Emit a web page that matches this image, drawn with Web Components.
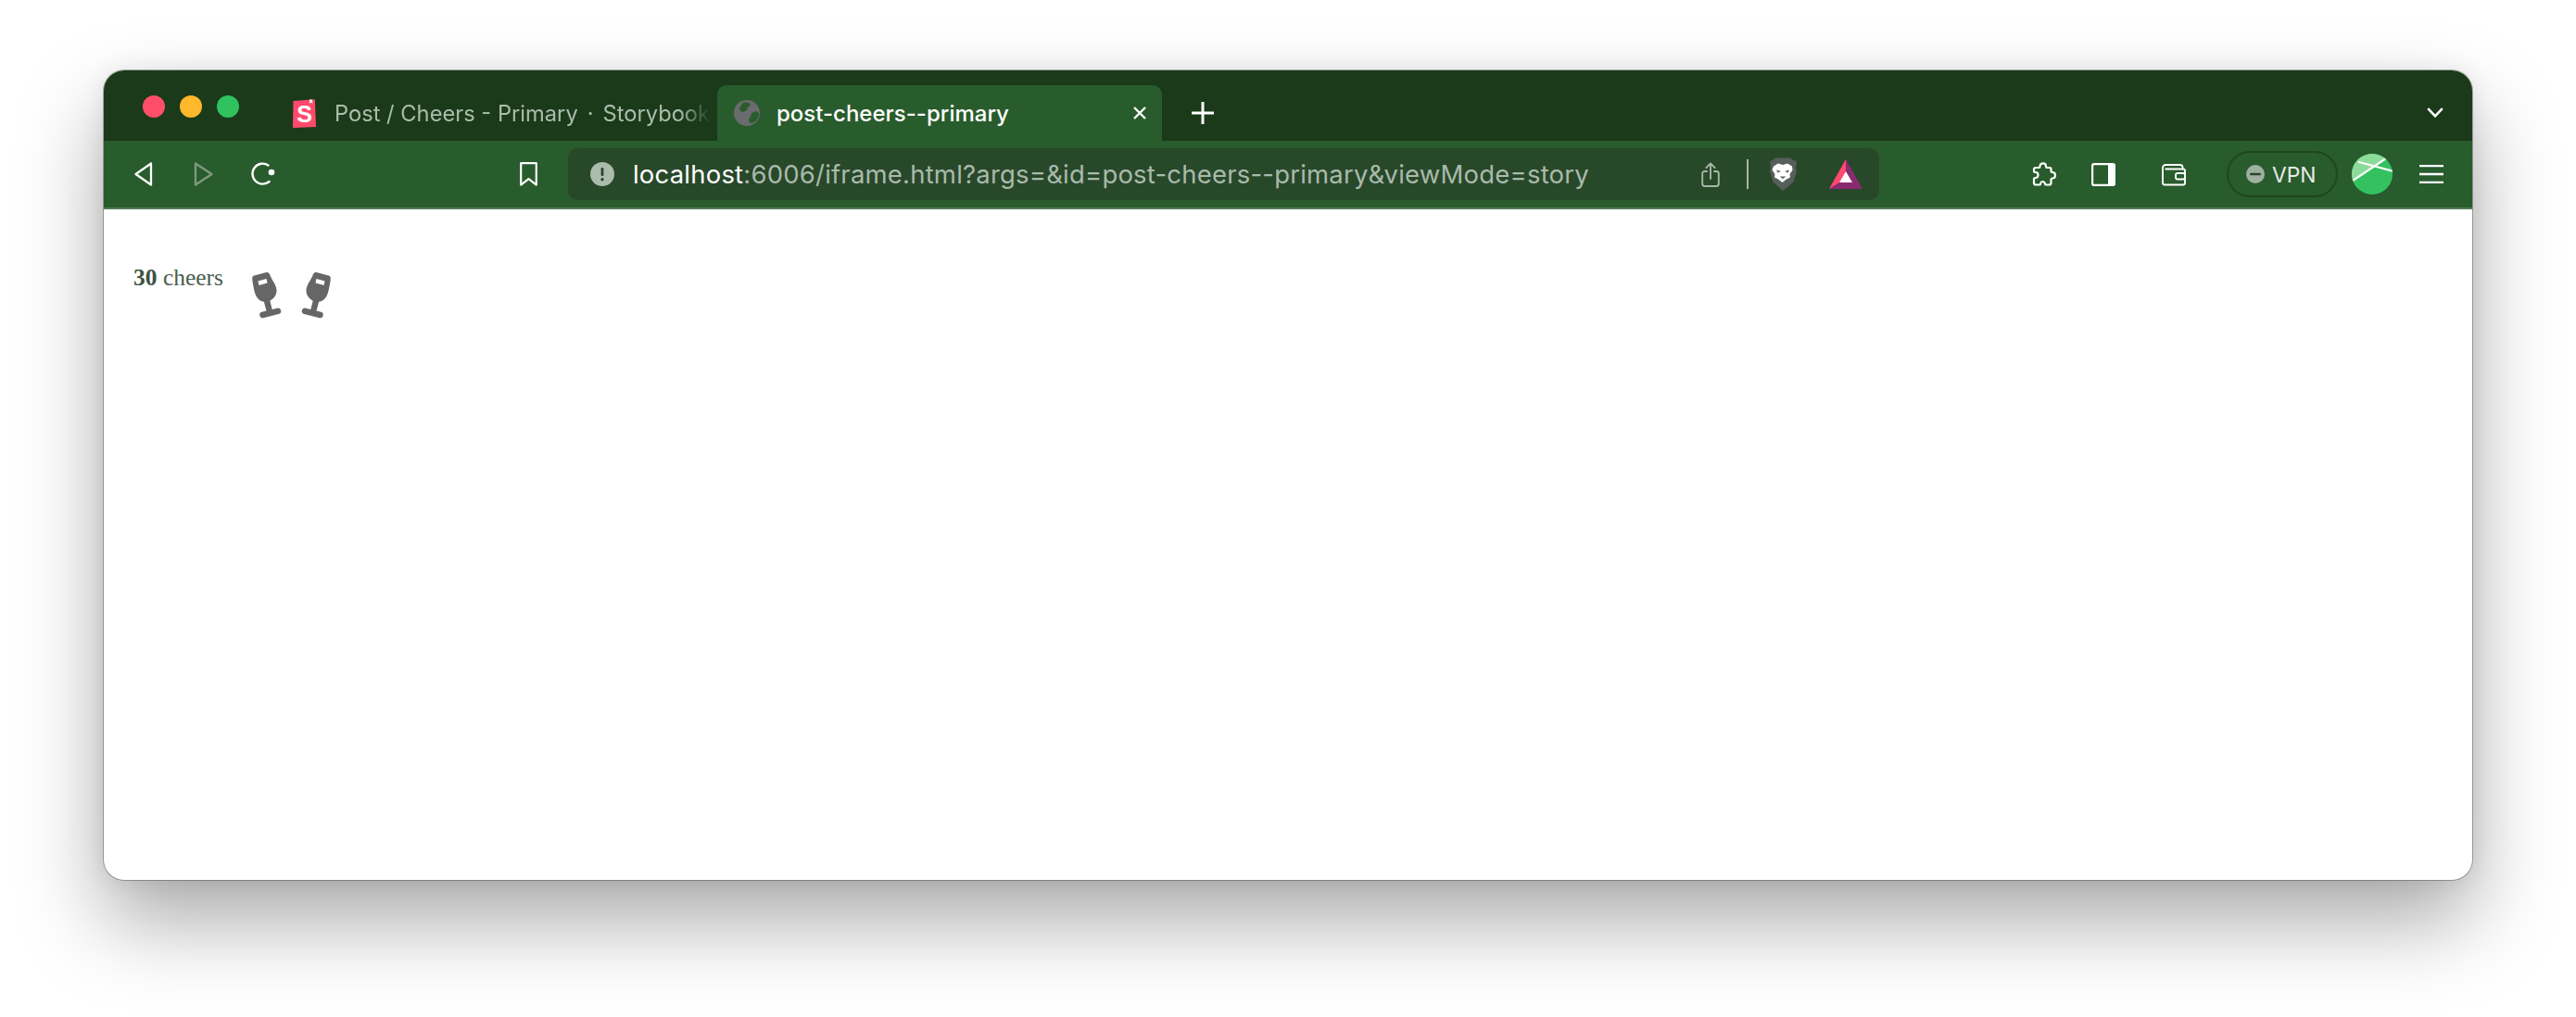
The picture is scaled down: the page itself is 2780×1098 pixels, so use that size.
<!DOCTYPE html>
<html lang="en">
<head>
<meta charset="utf-8">
<title>post-cheers--primary</title>
<style>
  html, body { margin: 0; height: 1098px; overflow: hidden; background: #fff; }
  body { padding: 76px 112px 0; box-sizing: border-box; font-family: Inter, "Liberation Sans", sans-serif; }
  .sep { margin: 0 10px; }
</style>
</head>
<body>
<browser-window>
  <tab-strip slot="chrome">
    <browser-tab favicon="storybook">Post / Cheers - Primary<span class="sep">·</span>Storybook</browser-tab>
    <browser-tab favicon="globe" active>post-cheers--primary</browser-tab>
  </tab-strip>
  <tool-bar slot="chrome">
    <tool-icon name="back" style="margin-left:33px"></tool-icon>
    <tool-icon name="forward" style="margin-left:44px"></tool-icon>
    <tool-icon name="reload" style="margin-left:41px"></tool-icon>
    <tool-icon name="bookmark" style="margin-left:266px"></tool-icon>
    <url-bar style="margin-left:33px">
      <tool-icon slot="start" name="alert"></tool-icon>
      <span class="host">localhost</span>
      <span>:6006/iframe.html?args=&amp;id=post-cheers--primary&amp;viewMode=story</span>
      <tool-icon slot="end" name="share"></tool-icon>
      <tool-icon slot="end" name="divider" style="margin-left:29px"></tool-icon>
      <tool-icon slot="end" name="lion" style="margin-left:21px"></tool-icon>
      <tool-icon slot="end" name="bat" style="margin-left:34px"></tool-icon>
    </url-bar>
    <tool-icon name="puzzle" style="margin-left:165px"></tool-icon>
    <tool-icon name="sidebar" style="margin-left:38px"></tool-icon>
    <tool-icon name="wallet" style="margin-left:50px"></tool-icon>
    <vpn-pill style="margin-left:44px"></vpn-pill>
    <tool-icon name="avatar" style="margin-left:15px"></tool-icon>
    <tool-icon name="menu" style="margin-left:29px"></tool-icon>
  </tool-bar>
  <post-cheers count="30"></post-cheers>
</browser-window>

<script>
/**
 * Inline icons used by the browser chrome. Each has a box size and its markup.
 */
const ICONS = {
  back: [20, 26, `<path d="M18 1.500 1.500 13 18 24.500z" fill="none" stroke="#fff" stroke-width="2.300" stroke-linejoin="round"/>`],
  forward: [21, 26, `<path d="M2 1.500 19.500 13 2 24.500z" fill="none" stroke="#7f9a80" stroke-width="2.300" stroke-linejoin="round"/>`],
  reload: [24, 26, `<path d="M18.500 3.400A11 11 0 1 0 19.600 21" fill="none" stroke="#fff" stroke-width="2.400" stroke-linecap="round"/><circle cx="22" cy="11" r="3.300" fill="#fff"/>`],
  bookmark: [19, 26, `<path d="M1.200 1.200h16.600v23.400l-8.300-6.400-8.300 6.400z" fill="none" stroke="#fff" stroke-width="2.200" stroke-linejoin="round"/>`],
  alert: [26, 26, `<circle cx="13" cy="13" r="13" fill="#abbbad"/><rect x="11.600" y="6" width="2.800" height="9" rx="1.200" fill="#28482a"/><circle cx="13" cy="18.800" r="1.700" fill="#28482a"/>`],
  share: [20, 27, `<path d="M6 10H3.600a2.400 2.400 0 0 0-2.400 2.400v11.200a2.400 2.400 0 0 0 2.400 2.400h12.800a2.400 2.400 0 0 0 2.400-2.400V12.400a2.400 2.400 0 0 0-2.400-2.400H14M10 18V1.800M5.300 6.200 10 1.500l4.700 4.700" fill="none" stroke="#a7b7a9" stroke-width="1.900" stroke-linecap="round" stroke-linejoin="round"/>`],
  divider: [2, 32, `<rect width="2" height="32" fill="#a7b7a9"/>`],
  lion: [32, 36, `<path d="M8 .5h16l3 2.500 4 1-.5 4-.5 4 1 3-3.500 11.500L16 36 5.500 26.500 2 15l1-3-.5-4L2 4l3-1z" fill="#565f59"/><path d="M6 9.500 11 6.500l5 1.500 5-1.500 5 3 .5 4-3 4.500.5 3.500-4 2-4.500 3.500-4.500-3.500-4-2 .5-3.500-3-4.500z" fill="#fff"/><path d="M9 13.500l5 1.500-3.500 1.500zM23 13.500l-5 1.500 3.500 1.500zM12.500 20.500h7L16 23z" fill="#565f59"/>`],
  bat: [36, 32, `<path d="M18 0 36 32H0z" fill="#8a2a70"/><path d="M18 0v13l-7 12-11 7z" fill="#ff4a6d"/><path d="M18 13l7 12H11z" fill="#fff"/>`],
  puzzle: [26, 26, `<path d="M7.500 6C8.300 6 8.500 5.400 8.500 4.500 8.500 2.500 10 1.300 11.800 1.300S15 2.500 15 4.500C15 5.300 15.500 6 16.500 6H19A1.500 1.500 0 0 1 20.500 7.500V9.500C20.500 10.500 21.200 11 22 11 24 11 25 12.500 25 14.200 25 16 24 17.500 22 17.500 21.200 17.500 20.500 18 20.500 19V22.500A2 2 0 0 1 18.500 24.500H15C14 24.500 14 23.500 13.800 22.800 13.400 21.600 12.500 21 11.500 21S9.500 21.600 9.200 22.800C9 23.500 9 24.500 8 24.500H4A2 2 0 0 1 2 22.500V18C2 17 3 17 4 17 5.500 17 6.500 15.500 6.500 14S5.500 11 4 11C3 11 2 11 2 10V8A2 2 0 0 1 4 6Z" fill="none" stroke="#fff" stroke-width="2.200" stroke-linejoin="round"/>`],
  sidebar: [26, 25, `<rect x="1.100" y="1.100" width="23.800" height="22.800" rx="2" fill="none" stroke="#fff" stroke-width="2.200"/><path d="M18 1h6a2 2 0 0 1 2 2v19a2 2 0 0 1-2 2h-6z" fill="#fff"/>`],
  wallet: [26, 23, `<path d="M3.500 5.500H23a2 2 0 0 1 2 2v13a2 2 0 0 1-2 2H3a2 2 0 0 1-2-2V4a3 3 0 0 1 3-3h16a2.500 2.500 0 0 1 2.500 2.500v2" fill="none" stroke="#fff" stroke-width="1.900"/><rect x="15" y="10" width="10" height="6.500" rx="2" fill="#295c2d" stroke="#fff" stroke-width="1.900"/>`],
  avatar: [44, 44, `<clipPath id="ac"><circle cx="22" cy="22" r="22"/></clipPath><g clip-path="url(#ac)"><rect width="44" height="44" fill="#33c25f"/><path d="M-2 30 40 2V-2H-2z" fill="#8ddb9b"/><path d="M1 29 37 5M7 8.700l37 10" stroke="#fff" stroke-width="2.200"/></g>`],
  menu: [26, 20, `<path d="M0 1.200h26M0 10h26M0 18.800h26" stroke="#fff" stroke-width="2.300"/>`],
  plus: [24, 24, `<path d="M12 0v24M0 12h24" stroke="#fff" stroke-width="3"/>`],
  close: [14, 14, `<path d="M1 1l12 12M13 1 1 13" stroke="#fff" stroke-width="2.400"/>`],
  chevron: [18, 11, `<path d="M1.200 1.200 9 9.400l7.800-8.200" fill="none" stroke="#fff" stroke-width="2.600"/>`],
  globe: [28, 28, `<circle cx="14" cy="14" r="14" fill="#6a6b6d"/><path d="M10 3c4-1 7 0 8 2l-3 3-1 3-4 2-3-1-1-4zM24 12l3 2c0 4-2 8-5 10l-5 1-1-4 2-3 1-4z" fill="#295c2d"/>`],
  storybook: [26, 31, `<path d="M1.500 2 24.800.300 26 30 1 31z" fill="#ff4a6d"/><path d="M19 .600l3-.200.300 4.400-1.600-1.200-1.500 1.200z" fill="#fff"/><text x="13.500" y="25" text-anchor="middle" font-family="'Liberation Sans', sans-serif" font-weight="700" font-size="25" fill="#fff">S</text>`],
};

/**
 * Builds the svg markup of one of the icons above.
 *
 * @param {string} name - A key of ICONS.
 * @returns {string} The markup.
 */
function iconMarkup(name) {
  const [width, height, body] = ICONS[name];
  return `<svg width="${width}" height="${height}" viewBox="0 0 ${width} ${height}" style="display:block;overflow:visible">${body}</svg>`;
}

/**
 * `<tool-icon>` draws one icon, picked by its `name` attribute.
 */
class ToolIcon extends HTMLElement {
  constructor() {
    super();
    const shadow = this.attachShadow({mode: 'open'});
    shadow.innerHTML = `<style>
    :host { display: block; flex: none; }
    </style>${iconMarkup(this.getAttribute('name'))}`;
  }
}
customElements.define('tool-icon', ToolIcon);

/**
 * `<browser-window>` is the rounded window with its desktop shadow.
 */
class BrowserWindow extends HTMLElement {
  constructor() {
    super();
    const shadow = this.attachShadow({mode: 'open'});
    shadow.innerHTML = `<style>
    :host {
      display: block;
      width: 2556px;
      height: 874px;
      border-radius: 22px;
      background: #fff;
      box-shadow: 0 0 0 1px rgba(0, 0, 0, .28), 0 0 26px rgba(0, 0, 0, .08), 0 44px 90px rgba(0, 0, 0, .34);
    }
    .clip { height: 100%; border-radius: 22px; overflow: hidden; }
    </style>
    <div class="clip"><slot name="chrome"></slot><slot></slot></div>`;
  }
}
customElements.define('browser-window', BrowserWindow);

/**
 * `<tab-strip>` holds the traffic lights, the tabs and the tab controls.
 */
class TabStrip extends HTMLElement {
  constructor() {
    super();
    const shadow = this.attachShadow({mode: 'open'});
    shadow.innerHTML = `<style>
    :host {
      display: flex;
      height: 76px;
      align-items: flex-end;
      background: #1a3a1a;
    }
    .lights { display: flex; gap: 16px; margin: 0 42px 25px 42px; }
    .lights i { width: 24px; height: 24px; border-radius: 50%; }
    .lights i:nth-child(1) { background: #ff4f68; }
    .lights i:nth-child(2) { background: #ffb72c; }
    .lights i:nth-child(3) { background: #30c25e; }
    .plus { margin: 0 0 18px 32px; }
    .chevron { margin: 0 31px 25px auto; }
    </style>
    <div class="lights"><i></i><i></i><i></i></div>
    <slot></slot>
    <div class="plus">${iconMarkup('plus')}</div>
    <div class="chevron">${iconMarkup('chevron')}</div>`;
  }
}
customElements.define('tab-strip', TabStrip);

/**
 * `<browser-tab>` is one tab. The `active` attribute gives it the toolbar colour
 * and a close button; `favicon` picks its icon.
 */
class BrowserTab extends HTMLElement {
  constructor() {
    super();
    const active = this.hasAttribute('active');
    const shadow = this.attachShadow({mode: 'open'});
    shadow.innerHTML = `<style>
    :host {
      display: flex;
      flex: none;
      box-sizing: border-box;
      height: 60px;
      width: ${active ? 480 : 474}px;
      align-items: center;
      padding: 0 ${active ? 17 : 7}px 0 ${active ? 18 : 15}px;
      gap: ${active ? 18 : 20}px;
      border-radius: 10px 10px 0 0;
      background: ${active ? '#295c2d' : 'transparent'};
      color: ${active ? '#fff' : '#aabcab'};
      font: ${active ? 500 : 400} ${active ? 24 : 23.700}px Inter, "Liberation Sans", sans-serif;
    }
    .fav { flex: none; }
    .label { flex: 1; min-width: 0; overflow: hidden; white-space: nowrap; ${active ? '' : 'mask-image: linear-gradient(to left, transparent, #000 34px); -webkit-mask-image: linear-gradient(to left, transparent, #000 34px);'} }
    </style>
    <div class="fav">${iconMarkup(this.getAttribute('favicon'))}</div>
    <div class="label"><slot></slot></div>
    ${active ? iconMarkup('close') : ''}`;
  }
}
customElements.define('browser-tab', BrowserTab);

/**
 * `<tool-bar>` is the row under the tabs. Children set their own left margins.
 */
class ToolBar extends HTMLElement {
  constructor() {
    super();
    const shadow = this.attachShadow({mode: 'open'});
    shadow.innerHTML = `<style>
    :host {
      display: flex;
      align-items: center;
      height: 72px;
      background: #295c2d;
      border-bottom: 2px solid #567a5a;
    }
    </style><slot></slot>`;
  }
}
customElements.define('tool-bar', ToolBar);

/**
 * `<url-bar>` is the address field: an icon, the address and the end icons.
 */
class UrlBar extends HTMLElement {
  constructor() {
    super();
    const shadow = this.attachShadow({mode: 'open'});
    shadow.innerHTML = `<style>
    :host {
      display: flex;
      flex: none;
      box-sizing: border-box;
      align-items: center;
      width: 1415px;
      height: 56px;
      padding: 0 18px 0 24px;
      border-radius: 10px;
      background: #28482a;
      color: #a9baab;
      font: 400 27.500px Inter, "Liberation Sans", sans-serif;
      letter-spacing: .2px;
    }
    .address { display: flex; flex: 1; min-width: 0; margin-left: 20px; white-space: nowrap; overflow: hidden; }
    ::slotted(.host) { color: #fff; }
    .end { display: flex; align-items: center; }
    </style>
    <slot name="start"></slot>
    <div class="address"><slot></slot></div>
    <div class="end"><slot name="end"></slot></div>`;
  }
}
customElements.define('url-bar', UrlBar);

/**
 * `<vpn-pill>` is the outlined VPN button.
 */
class VpnPill extends HTMLElement {
  constructor() {
    super();
    const shadow = this.attachShadow({mode: 'open'});
    shadow.innerHTML = `<style>
    :host {
      display: flex;
      flex: none;
      box-sizing: border-box;
      align-items: center;
      width: 120px;
      height: 50px;
      padding-left: 19px;
      gap: 8px;
      border: 2px solid #1f4622;
      border-radius: 25px;
      color: #e6ebe6;
      font: 400 22.800px Inter, "Liberation Sans", sans-serif;
    }
    svg { display: block; }
    </style>
    <svg width="20" height="20" viewBox="0 0 20 20"><circle cx="10" cy="10" r="10" fill="#9fb0a1"/><rect x="4" y="8.800" width="12" height="2.400" rx="1.200" fill="#28482a"/></svg>
    <span>VPN</span>`;
  }
}
customElements.define('vpn-pill', VpnPill);

/**
 * `<post-cheers>` is the story itself: the count and the two clinking glasses.
 */
class PostCheers extends HTMLElement {
  constructor() {
    super();
    const glass = `<path d="M2.500 4.500 15.500 1Q18 .5 19 3C21 9 26 14 26.500 20 27 26 22 32 15 33 8 33 4.500 28 3 23 1.500 17 .2 10 .2 7 .2 5 2.500 4.500 2.500 4.500Z" fill="#666"/>
      <path d="M15.500 30 19 43.500M11.500 47 28 42.800" stroke="#666" stroke-width="6.500" stroke-linecap="round" fill="none"/>
      <path d="M6.500 10.500 15.500 8 16.500 12.500 7.500 15z" fill="#fff"/>`;
    const shadow = this.attachShadow({mode: 'open'});
    shadow.innerHTML = `<style>
    :host {
      display: flex;
      align-items: flex-start;
      padding: 59px 0 0 32px;
      color: #4a5d4c;
      font: 400 25.500px "Liberation Serif", serif;
    }
    b { color: #3f5240; }
    .glasses { display: flex; gap: 23px; margin: 8px 0 0 31px; }
    svg { display: block; overflow: visible; }
    </style>
    <div><b>${this.getAttribute('count')}</b> cheers</div>
    <div class="glasses">
      <svg width="31" height="50" viewBox="0 0 31 50">${glass}</svg>
      <svg width="31" height="50" viewBox="0 0 31 50" style="transform:scaleX(-1)">${glass}</svg>
    </div>`;
  }
}
customElements.define('post-cheers', PostCheers);
</script>
</body>
</html>
